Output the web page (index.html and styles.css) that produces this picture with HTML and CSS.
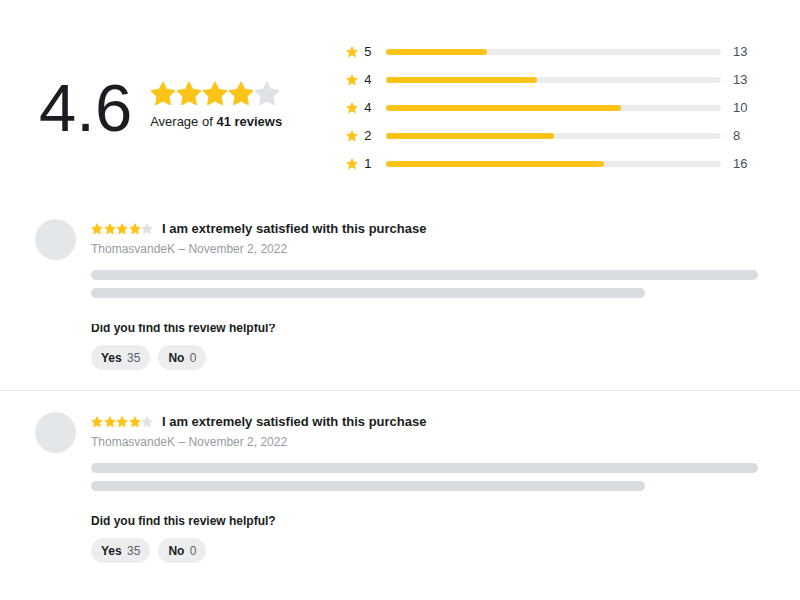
FILE: index.html
```html
<!DOCTYPE html>
<html lang="en">
<head>
  <meta charset="UTF-8">
  <meta name="viewport" content="width=device-width, initial-scale=1.0">
  <title>Reviews</title>
  <link rel="stylesheet" href="styles.css">
</head>
<body>
  <svg class="sprite" aria-hidden="true">
    <symbol id="star" viewBox="0 0 24 24">
      <path d="M12 1.400L15.200 8 22.500 9 17.200 14 18.500 21.500 12 18 5.500 21.500 6.800 14 1.500 9 8.800 8z" fill="currentColor" stroke="currentColor" stroke-width="1.600" stroke-linejoin="round"/>
    </symbol>
  </svg>

  <section class="summary">
    <div class="average">
      <div class="score">4.6</div>
      <div>
        <div class="stars stars-large">
          <svg><use href="#star"/></svg>
          <svg><use href="#star"/></svg>
          <svg><use href="#star"/></svg>
          <svg><use href="#star"/></svg>
          <svg class="empty"><use href="#star"/></svg>
        </div>
        <p class="average-text">Average of <strong>41 reviews</strong></p>
      </div>
    </div>
    <ul class="breakdown">
      <li>
        <svg><use href="#star"/></svg>
        <span>5</span>
        <div class="track"><div class="fill" style="width: 30%"></div></div>
        <span class="count">13</span>
      </li>
      <li>
        <svg><use href="#star"/></svg>
        <span>4</span>
        <div class="track"><div class="fill" style="width: 45%"></div></div>
        <span class="count">13</span>
      </li>
      <li>
        <svg><use href="#star"/></svg>
        <span>4</span>
        <div class="track"><div class="fill" style="width: 70%"></div></div>
        <span class="count">10</span>
      </li>
      <li>
        <svg><use href="#star"/></svg>
        <span>2</span>
        <div class="track"><div class="fill" style="width: 50%"></div></div>
        <span class="count">8</span>
      </li>
      <li>
        <svg><use href="#star"/></svg>
        <span>1</span>
        <div class="track"><div class="fill" style="width: 65%"></div></div>
        <span class="count">16</span>
      </li>
    </ul>
  </section>

  <article class="review">
    <div class="avatar"></div>
    <div class="review-body">
      <div class="review-head">
        <div class="stars">
          <svg><use href="#star"/></svg>
          <svg><use href="#star"/></svg>
          <svg><use href="#star"/></svg>
          <svg><use href="#star"/></svg>
          <svg class="empty"><use href="#star"/></svg>
        </div>
        <h3>I am extremely satisfied with this purchase</h3>
      </div>
      <p class="meta">ThomasvandeK – November 2, 2022</p>
      <div class="lines">
        <div class="line"></div>
        <div class="line short"></div>
      </div>
      <p class="question clipped">Did you find this review helpful?</p>
      <div class="votes">
        <button type="button">Yes <span>35</span></button>
        <button type="button">No <span>0</span></button>
      </div>
    </div>
  </article>

  <article class="review">
    <div class="avatar"></div>
    <div class="review-body">
      <div class="review-head">
        <div class="stars">
          <svg><use href="#star"/></svg>
          <svg><use href="#star"/></svg>
          <svg><use href="#star"/></svg>
          <svg><use href="#star"/></svg>
          <svg class="empty"><use href="#star"/></svg>
        </div>
        <h3>I am extremely satisfied with this purchase</h3>
      </div>
      <p class="meta">ThomasvandeK – November 2, 2022</p>
      <div class="lines">
        <div class="line"></div>
        <div class="line short"></div>
      </div>
      <p class="question">Did you find this review helpful?</p>
      <div class="votes">
        <button type="button">Yes <span>35</span></button>
        <button type="button">No <span>0</span></button>
      </div>
    </div>
  </article>
</body>
</html>
```

FILE: styles.css
```css
* {
  box-sizing: border-box;
}
body {
  margin: 0;
  font-family: "Liberation Sans", Arial, sans-serif;
  font-size: 13px;
  line-height: 20px;
  color: #1a1d21;
  background: #fff;
}
h3, p, ul {
  margin: 0;
  padding: 0;
}
.sprite {
  display: none;
}

/* summary */
.summary {
  display: flex;
  align-items: center;
  gap: 64px;
  padding: 38px 42px 20px 39px;
}
.average {
  display: flex;
  align-items: center;
  gap: 18px;
}
.score {
  font-size: 67px;
  line-height: 76px;
}
.stars {
  display: flex;
  justify-content: space-between;
  flex: none;
  width: 62px;
  color: #fcc419;
}
.stars svg {
  width: 12px;
  height: 12px;
}
.stars .empty {
  color: #dee2e6;
}
.stars-large {
  width: 130px;
}
.stars-large svg {
  width: 26px;
  height: 26px;
}
.average-text {
  margin: 5px 0 3px;
  white-space: nowrap;
}
.breakdown {
  flex: 1;
  list-style: none;
}
.breakdown li {
  display: grid;
  grid-template-columns: 12px 16px 1fr 25px;
  column-gap: 6px;
  align-items: center;
  height: 28px;
}
.breakdown svg {
  width: 12px;
  height: 12px;
  color: #fcc419;
}
.track {
  height: 6px;
  margin-right: 6px;
  border-radius: 3px;
  background: #ececec;
}
.fill {
  height: 6px;
  border-radius: 3px;
  background: #fcc419;
}
.count {
  color: #495057;
}

/* reviews */
.review {
  display: flex;
  gap: 15px;
  padding: 21px 42px 20px 35px;
  border-bottom: 1px solid #e9ecef;
}
.review:last-child {
  border-bottom: 0;
}
.avatar {
  flex: none;
  width: 41px;
  height: 41px;
  border-radius: 50%;
  background: #e3e7ea;
}
.review-body {
  flex: 1;
}
.review-head {
  display: flex;
  align-items: center;
  gap: 9px;
}
.review-head h3 {
  font-size: 13px;
}
.meta {
  font-size: 12px;
  color: #969ca3;
}
.lines {
  display: grid;
  gap: 8px;
  margin: 11px 0 20px;
}
.line {
  height: 10px;
  border-radius: 5px;
  background: #d8dce0;
}
.short {
  width: 83%;
}
.question {
  margin-bottom: 7px;
  font-size: 12px;
  font-weight: bold;
}
.clipped {
  clip-path: inset(6px 0 0);
}
.votes {
  display: flex;
  gap: 8px;
}
.votes button {
  height: 25px;
  padding: 0 10px;
  border: 0;
  border-radius: 13px;
  background: #ecedef;
  color: #1a1d21;
  font: bold 12px "Liberation Sans", Arial, sans-serif;
  cursor: pointer;
}
.votes span {
  margin-left: 2px;
  font-weight: normal;
  color: #5c6268;
}
```
